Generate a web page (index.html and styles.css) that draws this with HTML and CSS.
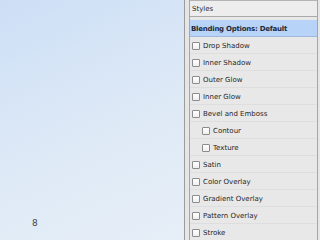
FILE: index.html
```html
<!DOCTYPE html>
<html lang="en">

<head>
    <meta charset="utf-8">
    <title>Layer Styles</title>
    <link rel="stylesheet" href="styles.css">
</head>

<body>
    <div class="slide">
        <div class="canvas">
            <span class="page-num">8</span>
        </div>

        <div class="panel">
            <div class="styles-list">
                <div class="list-head">Styles</div>
                <div class="row row-selected">Blending Options: Default</div>
                <div class="row"><span class="check"></span>Drop Shadow</div>
                <div class="row"><span class="check"></span>Inner Shadow</div>
                <div class="row"><span class="check"></span>Outer Glow</div>
                <div class="row"><span class="check"></span>Inner Glow</div>
                <div class="row"><span class="check"></span>Bevel and Emboss</div>
                <div class="row row-sub"><span class="check"></span>Contour</div>
                <div class="row row-sub"><span class="check"></span>Texture</div>
                <div class="row"><span class="check"></span>Satin</div>
                <div class="row"><span class="check"></span>Color Overlay</div>
                <div class="row"><span class="check"></span>Gradient Overlay</div>
                <div class="row"><span class="check"></span>Pattern Overlay</div>
                <div class="row"><span class="check"></span>Stroke</div>
            </div>
        </div>
    </div>
</body>

</html>
```

FILE: styles.css
```css
body {
    margin: 0;
    overflow: hidden;
    font-family: 'DejaVu Sans', Verdana, sans-serif;
}

.slide {
    display: flex;
    width: 320px;
    height: 240px;
    background: linear-gradient(155deg, #cddff6 0%, #dfeaf6 50%, #eaf1f9 100%);
}

.canvas {
    flex: 1;
    display: flex;
    flex-direction: column;
    justify-content: flex-end;
    padding: 0 0 12px 32px;
}

.page-num {
    font-size: 9px;
    color: #444;
}

.panel {
    width: 131px;
    border-left: 1px solid #9c9c9c;
    background-color: #e6e6e6;
    padding-left: 4px;
    overflow: hidden;
}

.styles-list {
    width: 127px;
    height: 100%;
    border-left: 1px solid #a6a6a6;
    border-right: 1px solid #a6a6a6;
    background-color: #e8e8e8;
}

.list-head {
    height: 15px;
    line-height: 16px;
    border-top: 1px solid #b4b4b4;
    border-bottom: 1px solid #a9a9a9;
    background-color: #ededed;
    padding-left: 2px;
    margin-bottom: 3px;
    font-size: 7px;
    color: #2a2a2a;
}

.row {
    display: flex;
    align-items: center;
    gap: 3px;
    height: 16px;
    padding-top: 1px;
    box-sizing: border-box;
    height: 17px;
    border-bottom: 1px solid #dedede;
    padding-left: 2px;
    font-size: 7px;
    color: #262626;
    white-space: nowrap;
}

.row-selected {
    background-color: #b7d3f8;
    border-bottom-color: #9fb9dd;
    padding-left: 1px;
    font-weight: bold;
    letter-spacing: -0.25px;
    color: #1f2a3a;
}

.row-sub {
    padding-left: 12px;
}

.check {
    flex: none;
    width: 6px;
    height: 6px;
    border: 1px solid #8c8c8c;
    border-radius: 1px;
    background: linear-gradient(#ffffff, #efefef);
}
```
